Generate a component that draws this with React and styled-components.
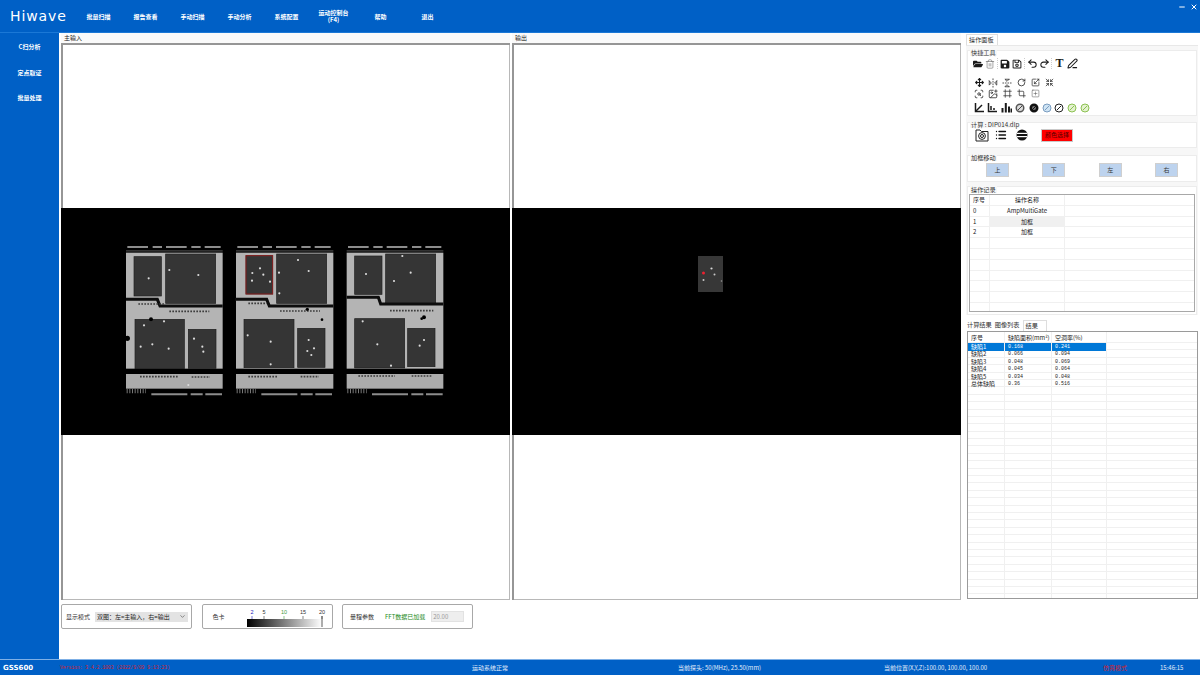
import React from 'react';
import styled, { createGlobalStyle } from 'styled-components';
import {
  FaFolderOpen, FaSave, FaRegSave, FaArrowsAlt,
} from 'react-icons/fa';
import {
  Trash2, Undo2, Redo2, PenLine, FlipHorizontal2, FlipVertical2, RotateCw, Scaling, Shrink,
  ScanSearch, ImagePlus, Frame, Crop, SquarePlus, ChevronDown, List, Minus, X,
} from 'lucide-react';

const BLUE = '#0060c6';
const CJK = `'Noto Sans CJK SC', 'Noto Sans', sans-serif`;

const GlobalStyle = createGlobalStyle`
  html, body { margin: 0; padding: 0; background: #fff; }
  body { font-family: ${CJK}; font-size: 6px; color: #222; }
  * { box-sizing: border-box; }
`;

const Shell = styled.div`
  display: grid;
  grid-template-rows: 33px 1fr 16px;
  width: 1200px;
  height: 675px;
  overflow: hidden;
  background: ${BLUE};
`;

/* top bar */
const TopBar = styled.header`
  display: flex;
  align-items: center;
  background: ${BLUE};
  color: #fff;
  border-bottom: 1px solid #1b78d6;
`;

const Logo = styled.div`
  width: 75px;
  padding-left: 10px;
  font-family: 'DejaVu Sans', sans-serif;
  font-size: 14px;
  letter-spacing: 0.9px;
`;

const MenuItem = styled.div`
  width: 47px;
  text-align: center;
  font-size: 6px;
  font-weight: 700;
  line-height: 7px;
`;

const WindowButtons = styled.div`
  display: flex;
  align-items: center;
  gap: 4px;
  margin-left: auto;
  margin-right: 2px;
  margin-top: -19px;
`;

/* middle */
const Middle = styled.div`
  display: flex;
  min-height: 0;
`;

const SideNav = styled.nav`
  display: flex;
  flex-direction: column;
  width: 59px;
  padding-top: 1px;
  background: ${BLUE};
`;

const NavItem = styled.div`
  height: 25.6px;
  line-height: 25.6px;
  text-align: center;
  color: #fff;
  font-size: 6px;
  font-weight: 700;
`;

const Workspace = styled.main`
  flex: 1;
  display: flex;
  flex-direction: column;
  background: #fff;
`;

const ViewRow = styled.div`
  display: flex;
  height: 567px;
  padding-left: 2px;
`;

const Viewer = styled.section`
  display: flex;
  flex-direction: column;
  width: 449px;
  margin-right: ${(p) => p.$gap}px;
`;

const ViewerTab = styled.div`
  height: 10px;
  line-height: 9px;
  padding-left: 3px;
  font-size: 6px;
  color: #222;
  background: #fafafa;
`;

const ViewerFrame = styled.div`
  flex: 1;
  display: flex;
  align-items: center;
  background: #fff;
  box-shadow: inset 2px 2px 0 #969696, inset -1px -1px 0 #b8b8b8;
`;

const BlackImage = styled.svg`
  display: block;
  width: 100%;
  height: 227px;
  background: #000;
`;

/* right operations column */
const OpsColumn = styled.aside`
  display: flex;
  flex-direction: column;
  width: 232px;
`;

const TabStrip = styled.div`
  display: flex;
  align-items: flex-end;
  height: ${(p) => p.$h}px;
  gap: ${(p) => p.$gap || 0}px;
  padding-left: ${(p) => p.$pad || 0}px;
`;

const Tab = styled.div`
  height: 11px;
  line-height: 10px;
  padding: 0 ${(p) => p.$pr}px 0 ${(p) => p.$pl}px;
  font-size: 6.2px;
  color: #333;
  background: ${(p) => (p.$active ? '#fff' : 'transparent')};
  border: ${(p) => (p.$active ? '1px solid #dedede' : 'none')};
  border-bottom: none;
`;

const OpsBody = styled.div`
  height: 270px;
  padding: 4px 1px 0;
  background: #f7f7f7;
  border-top: 1px solid #e8e8e8;
`;

const Group = styled.fieldset`
  position: relative;
  display: block;
  height: ${(p) => p.$h}px;
  margin: 0 0 ${(p) => p.$mb}px;
  padding: ${(p) => p.$pt}px 1px 0;
  background: #fff;
  border: 1px solid #ececec;
`;

const Legend = styled.span`
  position: absolute;
  top: ${(p) => p.$top ?? -2}px;
  left: 2px;
  padding: 0 1px;
  height: 7px;
  line-height: 7px;
  font-size: 6.2px;
  color: #333;
  background: #f7f7f7;
`;

const IconRow = styled.div`
  display: flex;
  align-items: center;
  height: 11px;
  margin-top: ${(p) => p.$mt || 0}px;
  padding-left: 3px;
  gap: ${(p) => p.$gap || 0}px;
`;

const IconPair = styled.div`
  display: flex;
  align-items: center;
  padding-right: 1px;
  border-right: 1px dotted #ccc;
`;

const Slot = styled.span`
  display: flex;
  align-items: center;
  justify-content: center;
  width: ${(p) => p.$w || 14}px;
  height: 11px;
  color: ${(p) => p.$c || '#1a1a1a'};
`;

const SerifT = styled.span`
  font-family: 'Liberation Serif', serif;
  font-size: 12px;
  font-weight: 700;
  line-height: 11px;
`;

const CalcRow = styled.div`
  display: flex;
  align-items: center;
  height: 14px;
  padding-left: 5px;
`;

const CalcSlot = styled.span`
  display: flex;
  justify-content: center;
  width: ${(p) => p.$w}px;
  color: #111;
`;

const RedButton = styled.div`
  width: 32px;
  height: 13px;
  margin-left: 9px;
  line-height: 10px;
  text-align: center;
  font-size: 6px;
  color: #5a0000;
  background: #f00;
  border: 1px solid #c9c9c9;
`;

const MoveRow = styled.div`
  display: flex;
  justify-content: space-between;
  padding: 0 17px;
`;

const MoveButton = styled.div`
  width: 23px;
  height: 14px;
  line-height: 12px;
  text-align: center;
  font-size: 6px;
  color: #333;
  background: #bdd3ee;
  border: 1px solid #cfcfcf;
`;

const LogTable = styled.div`
  height: 118px;
  overflow: hidden;
  background: #fff;
  border: 1px solid #a8a8a8;
`;

const GridRow = styled.div`
  display: grid;
  grid-template-columns: ${(p) => p.$cols};
  height: ${(p) => p.$h}px;
  line-height: ${(p) => p.$h}px;
  font-size: 6px;
  color: #222;
  border-bottom: 1px solid #f0f0f0;
`;

const Cell = styled.div`
  padding-left: ${(p) => p.$pad ?? 3}px;
  padding-top: ${(p) => (p.$num ? 1 : 0)}px;
  font-family: ${(p) => (p.$num ? `'Liberation Mono', monospace` : 'inherit')};
  font-size: ${(p) => (p.$num ? '5px' : 'inherit')};
  text-align: ${(p) => p.$align || 'left'};
  background: ${(p) => p.$bg || 'transparent'};
  color: ${(p) => p.$fg || 'inherit'};
  border-right: 1px solid ${(p) => (p.$flat ? 'transparent' : '#f0f0f0')};
  white-space: nowrap;
`;

const ResultFrame = styled.div`
  height: 268px;
  margin-left: 1px;
  overflow: hidden;
  background: #fff;
  border: 1px solid #9a9a9a;
`;

/* bottom tools */
const ToolRow = styled.div`
  display: flex;
  gap: 9.5px;
  padding: 4px 0 0 2px;
`;

const ToolBox = styled.div`
  display: flex;
  align-items: center;
  width: 131px;
  height: 25px;
  padding-left: ${(p) => p.$pad}px;
  font-size: 6px;
  color: #333;
  border: 1px solid #a8a8a8;
  border-radius: 2px;
`;

const FakeSelect = styled.div`
  display: flex;
  align-items: center;
  justify-content: space-between;
  width: 93px;
  height: 10px;
  margin-left: 5px;
  padding: 0 2px;
  background: #e3e3e3;
  color: #222;
`;

const LoadedText = styled.span`
  margin-left: 11px;
  color: #1a8a1a;
`;

const ValueBox = styled.span`
  width: 33px;
  height: 11px;
  margin-left: 6px;
  padding-left: 1px;
  line-height: 10px;
  color: #999;
  background: #eeeeee;
  border: 1px solid #e2e2e2;
`;

const ScaleSvg = styled.svg`
  display: block;
  margin-left: 22px;
`;

/* status bar */
const StatusBar = styled.footer`
  display: grid;
  grid-template-columns: 57px 412px 206px 206px 219px 57px 1fr;
  align-items: center;
  padding-left: 3px;
  font-size: 6px;
  color: #fff;
  background: ${BLUE};
  border-top: 1px solid #7fb0e6;
`;

const BrandName = styled.div`
  font-family: 'DejaVu Sans', sans-serif;
  font-size: 7px;
  font-weight: 700;
`;

const StatusText = styled.div`
  font-family: ${(p) => (p.$mono ? `'Liberation Mono', ${CJK}` : CJK)};
  font-size: ${(p) => (p.$mono ? 4.7 : 6)}px;
  color: ${(p) => p.$c || '#e4eefb'};
  white-space: nowrap;
`;

const MENU = ['批量扫描', '报告查看', '手动扫描', '手动分析', '系统配置', '运动控制台\n(F4)', '帮助', '退出'];
const NAV = ['C扫分析', '定点取证', '批量处理'];

/* the scan picture, in 3x crop units */
const CHIPS = [
  {
    x: 18, w: 290,
    pads: [[42, 50, 82, 118], [137, 42, 150, 148], [45, 238, 148, 148], [205, 268, 83, 117]],
    notch: '18,178 112,178 120,198 308,198',
    dots: [[86, 115], [235, 105], [148, 90], [62, 320], [97, 313], [146, 326], [222, 296], [247, 320], [250, 335], [132, 244], [72, 256], [205, 435]],
    holes: [[93, 238, 6], [22, 295, 8]],
    rows: [[55, 192, 80], [148, 214, 120], [60, 410, 115], [215, 411, 55]],
  },
  {
    x: 348, w: 292,
    pads: [[378, 47, 80, 115], [470, 42, 150, 148], [372, 238, 150, 145], [533, 265, 82, 117]],
    notch: '345,178 440,178 448,198 640,198',
    red: [378, 47, 80, 115],
    dots: [[397, 99], [420, 85], [430, 104], [396, 122], [450, 125], [534, 60], [566, 93], [477, 98], [478, 160], [383, 286], [452, 305], [452, 373], [566, 300], [562, 333], [582, 325], [574, 345]],
    holes: [[562, 208, 5], [606, 239, 4]],
    rows: [[385, 190, 55], [480, 213, 120], [385, 410, 90], [542, 410, 55]],
  },
  {
    x: 680, w: 290,
    pads: [[704, 48, 82, 115], [797, 42, 150, 148], [704, 236, 150, 148], [863, 265, 82, 115]],
    notch: '680,172 775,172 782,192 970,192',
    dots: [[847, 48], [872, 98], [822, 123], [772, 313], [899, 317], [813, 377], [728, 244], [912, 300], [738, 102]],
    holes: [[912, 232, 6], [905, 236, 4]],
    rows: [[810, 212, 130], [715, 408, 110], [875, 408, 60]],
  },
];

const Chip = ({ chip }) => (
  <g>
    <rect x={chip.x} y={38} width={chip.w} height={348} fill="#b4b4b4" />
    {chip.pads.map((p) => (
      <rect key={p.join()} x={p[0]} y={p[1]} width={p[2]} height={p[3]} fill="#363636" stroke="#1c1c1c" strokeWidth="2" />
    ))}
    <polyline points={chip.notch} fill="none" stroke="#0a0a0a" strokeWidth="9" />
    <rect x={chip.x} y={402} width={chip.w} height={44} fill="#ababab" />
    <rect x={chip.x} y={30} width={chip.w} height={5} fill="#333" />
    <line x1={chip.x + 4} y1={21} x2={chip.x + 284} y2={21} stroke="#8c8c8c" strokeWidth="6" strokeDasharray="62 14 28 12" />
    <line x1={chip.x + 76} y1={463} x2={chip.x + 288} y2={463} stroke="#8c8c8c" strokeWidth="6" strokeDasharray="108 10 36 8" />
    <line x1={chip.x + 2} y1={452} x2={chip.x + 60} y2={452} stroke="#777" strokeWidth="16" strokeDasharray="3 5" />
    {chip.rows.map((r) => (
      <line key={r.join()} x1={r[0]} y1={r[1]} x2={r[0] + r[2]} y2={r[1]} stroke="#3c3c3c" strokeWidth="5" strokeDasharray="5 4" />
    ))}
    {chip.dots.map((d) => (
      <circle key={d.join()} cx={d[0]} cy={d[1]} r="3.2" fill="#dcdcdc" />
    ))}
    {chip.holes.map((h) => (
      <circle key={h.join()} cx={h[0]} cy={h[1]} r={h[2]} fill="#050505" />
    ))}
    {chip.red && (
      <rect x={chip.red[0]} y={chip.red[1]} width={chip.red[2]} height={chip.red[3]} fill="none" stroke="#8a2020" strokeWidth="3" />
    )}
  </g>
);

const InputPicture = () => (
  <BlackImage viewBox="-177 -96 1347 681" preserveAspectRatio="none">
    <defs>
      <filter id="soft"><feGaussianBlur stdDeviation="1.4" /></filter>
    </defs>
    <g filter="url(#soft)">
      {CHIPS.map((c) => <Chip key={c.x} chip={c} />)}
    </g>
  </BlackImage>
);

const OutputPicture = () => (
  <BlackImage viewBox="512 208 449 227" preserveAspectRatio="none">
    <rect x="698" y="256" width="25" height="36" fill="#373737" />
    <circle cx="711.5" cy="268.5" r="1.1" fill="#d8d8d8" />
    <circle cx="714.5" cy="274.5" r="1" fill="#c8c8c8" />
    <circle cx="703.5" cy="280" r="1" fill="#c8c8c8" />
    <circle cx="721.5" cy="281" r="0.8" fill="#999" />
    <circle cx="703.5" cy="273" r="1.5" fill="#ee2030" />
  </BlackImage>
);

const AngleIcon = ({ flip }) => (
  <svg width="11" height="11" viewBox="0 0 11 11" fill="none" stroke="#1a1a1a" strokeWidth="1.5">
    <path d="M1.5 1v8.5H10" />
    <path d={flip ? 'M4 8V4M7 8V6' : 'M2 9L8 3'} />
  </svg>
);

const BarsIcon = () => (
  <svg width="11" height="11" viewBox="0 0 11 11" fill="#1a1a1a">
    <rect x="0.5" y="6" width="2" height="4.5" />
    <rect x="3.8" y="1" width="2" height="9.5" />
    <rect x="7" y="4.5" width="2" height="6" />
    <rect x="9.5" y="6.5" width="1.5" height="4" />
  </svg>
);

const DialIcon = ({ ring, fill, mark, bw = 1 }) => (
  <svg width="10" height="10" viewBox="0 0 10 10" fill="none">
    <circle cx="5" cy="5" r={4.5 - bw / 2} fill={fill} stroke={ring} strokeWidth={bw} />
    <path d="M3 7L7 3" stroke={mark} strokeWidth="1" />
  </svg>
);

const ProbeIcon = () => (
  <svg width="14" height="14" viewBox="0 0 14 14" fill="none" stroke="#222" strokeWidth="1">
    <path d="M1 2h4l1.5 1.5H13v9.5H1z" />
    <circle cx="7" cy="8" r="3.4" />
    <circle cx="7" cy="8" r="1.5" />
  </svg>
);

const NoEntry = () => (
  <svg width="12" height="12" viewBox="0 0 12 12">
    <circle cx="6" cy="6" r="5.5" fill="#111" />
    <rect x="1" y="3.8" width="10" height="1.2" fill="#fff" />
    <rect x="1" y="7" width="10" height="1.2" fill="#fff" />
  </svg>
);

const ColorScale = () => {
  const ticks = [[5, '2', '#2222bb'], [17, '5', '#333'], [37, '10', '#3f9a3f'], [56, '15', '#333'], [75, '20', '#333']];
  return (
    <ScaleSvg width="80" height="20" viewBox="0 0 80 20">
      <defs>
        <linearGradient id="scale">
          <stop offset="0" stopColor="#000" />
          <stop offset="1" stopColor="#fff" />
        </linearGradient>
      </defs>
      <rect x="0" y="12" width="75" height="8" fill="url(#scale)" />
      {ticks.map(([x, label, c]) => (
        <g key={label}>
          <line x1={x} y1="9" x2={x} y2="12" stroke={c} strokeWidth="0.6" />
          <text x={x} y="7" fontSize="5.5" textAnchor="middle" fill={c} fontFamily="Liberation Sans, sans-serif">{label}</text>
        </g>
      ))}
      <line x1="75" y1="9" x2="75" y2="20" stroke="#333" strokeWidth="0.8" />
    </ScaleSvg>
  );
};

const LOG_COLS = '20px 75px 1fr';
const LOG_ROWS = [
  ['序号', '操作名称'],
  ['0', 'AmpMultiGate'],
  ['1', '加框', true],
  ['2', '加框'],
  ...Array.from({ length: 7 }, () => ['', '']),
];

const RES_COLS = '37px 47px 55px 1fr';
const RESULTS = [
  ['缺陷1', '0.168', '0.241'],
  ['缺陷2', '0.066', '0.094'],
  ['缺陷3', '0.048', '0.069'],
  ['缺陷4', '0.045', '0.064'],
  ['缺陷5', '0.034', '0.048'],
  ['总体缺陷', '0.36', '0.516'],
];

const App = () => (
  <Shell>
    <GlobalStyle />
    <TopBar>
      <Logo>Hiwave</Logo>
      {MENU.map((m) => (
        <MenuItem key={m}>
          {m.split('\n').map((line) => <div key={line}>{line}</div>)}
        </MenuItem>
      ))}
      <WindowButtons>
        <Minus size={8} strokeWidth={3} color="#fff" />
        <X size={8} strokeWidth={3} color="#fff" />
      </WindowButtons>
    </TopBar>

    <Middle>
      <SideNav>
        {NAV.map((n) => <NavItem key={n}>{n}</NavItem>)}
      </SideNav>
      <Workspace>
        <ViewRow>
          <Viewer $gap={2}>
            <ViewerTab>主输入</ViewerTab>
            <ViewerFrame><InputPicture /></ViewerFrame>
          </Viewer>
          <Viewer $gap={5}>
            <ViewerTab>输出</ViewerTab>
            <ViewerFrame><OutputPicture /></ViewerFrame>
          </Viewer>
          <OpsColumn>
            <TabStrip $h={12}><Tab $active $pl={2} $pr={3}>操作面板</Tab></TabStrip>
            <OpsBody>
              <Group $h={66} $mb={6} $pt={7}>
                <Legend>快捷工具</Legend>
                <IconRow $gap={1}>
                  <IconPair>
                    <Slot $w={12}><FaFolderOpen size={10} /></Slot>
                    <Slot $w={12} $c="#666"><Trash2 size={10} strokeWidth={1.4} /></Slot>
                  </IconPair>
                  <IconPair>
                    <Slot $w={12}><FaSave size={10} /></Slot>
                    <Slot $w={12}><FaRegSave size={10} /></Slot>
                  </IconPair>
                  <IconPair>
                    <Slot $w={12}><Undo2 size={11} strokeWidth={2.2} /></Slot>
                    <Slot $w={12}><Redo2 size={11} strokeWidth={2.2} /></Slot>
                  </IconPair>
                  <Slot $w={13}><SerifT>T</SerifT></Slot>
                  <Slot $w={11}><PenLine size={11} strokeWidth={2.2} /></Slot>
                </IconRow>
                <IconRow $mt={8}>
                  <Slot><FaArrowsAlt size={9} /></Slot>
                  <Slot $c="#333"><FlipHorizontal2 size={10} /></Slot>
                  <Slot $c="#333"><FlipVertical2 size={10} /></Slot>
                  <Slot><RotateCw size={9} strokeWidth={2} /></Slot>
                  <Slot $c="#333"><Scaling size={9} /></Slot>
                  <Slot $c="#333"><Shrink size={9} /></Slot>
                </IconRow>
                <IconRow>
                  <Slot $c="#333"><ScanSearch size={10} /></Slot>
                  <Slot $c="#333"><ImagePlus size={10} /></Slot>
                  <Slot $c="#333"><Frame size={9} /></Slot>
                  <Slot $c="#333"><Crop size={9} /></Slot>
                  <Slot $c="#555"><SquarePlus size={9} strokeWidth={1.4} /></Slot>
                </IconRow>
                <IconRow $mt={3}>
                  <Slot><AngleIcon /></Slot>
                  <Slot $w={13.5}><AngleIcon flip /></Slot>
                  <Slot $w={13.5}><BarsIcon /></Slot>
                  <Slot $w={14.5}><DialIcon ring="#555" fill="#ddd" mark="#444" bw={1.5} /></Slot>
                  <Slot $w={13}><DialIcon ring="#111" fill="#777" mark="#111" bw={2.5} /></Slot>
                  <Slot $w={12}><DialIcon ring="#7a9cc0" fill="#cfe4f4" mark="#7a9cc0" /></Slot>
                  <Slot $w={12.5}><DialIcon ring="#222" fill="#fff" mark="#222" /></Slot>
                  <Slot $w={13}><DialIcon ring="#8cc152" fill="#e4f2d0" mark="#8cc152" /></Slot>
                  <Slot $w={13}><DialIcon ring="#8cc152" fill="#e4f2d0" mark="#8cc152" /></Slot>
                </IconRow>
              </Group>

              <Group $h={26} $mb={7} $pt={5}>
                <Legend>计算 : DIP014.dlp</Legend>
                <CalcRow>
                  <CalcSlot $w={15}><ProbeIcon /></CalcSlot>
                  <CalcSlot $w={23}><List size={12} strokeWidth={2.6} /></CalcSlot>
                  <CalcSlot $w={20}><NoEntry /></CalcSlot>
                  <RedButton>颜色选择</RedButton>
                </CalcRow>
              </Group>

              <Group $h={27} $mb={4} $pt={7}>
                <Legend>加框移动</Legend>
                <MoveRow>
                  {['上', '下', '左', '右'].map((t) => <MoveButton key={t}>{t}</MoveButton>)}
                </MoveRow>
              </Group>

              <Group $h={129} $mb={0} $pt={7}>
                <Legend $top={-1}>操作记录</Legend>
                <LogTable>
                  {LOG_ROWS.map((r, i) => (
                    <GridRow key={i} $cols={LOG_COLS} $h={10.8}>
                      <Cell>{r[0]}</Cell>
                      <Cell $align="center" $pad={0} $bg={r[2] ? '#f0f0f0' : undefined}>{r[1]}</Cell>
                      <Cell $flat />
                    </GridRow>
                  ))}
                </LogTable>
              </Group>
            </OpsBody>

            <TabStrip $h={16} $pad={1} $gap={3}>
              <Tab $pl={0} $pr={0}>计算结果</Tab>
              <Tab $pl={0} $pr={0}>图像列表</Tab>
              <Tab $active $pl={2} $pr={8}>结果</Tab>
            </TabStrip>
            <ResultFrame>
              <GridRow $cols={RES_COLS} $h={11}>
                <Cell>序号</Cell>
                <Cell>缺陷面积(mm²)</Cell>
                <Cell>空洞率(%)</Cell>
                <Cell $flat />
              </GridRow>
              {RESULTS.map((r, i) => (
                <GridRow key={r[0]} $cols={RES_COLS} $h={7.4}>
                  {r.map((v, c) => (
                    <Cell
                      key={v}
                      $num={c > 0}
                      $bg={i === 0 ? '#0078d7' : undefined}
                      $fg={i === 0 ? '#fff' : undefined}
                    >
                      {v}
                    </Cell>
                  ))}
                  <Cell $flat />
                </GridRow>
              ))}
              {Array.from({ length: 30 }, (_, i) => (
                <GridRow key={i} $cols={RES_COLS} $h={7.4}>
                  <Cell /><Cell /><Cell /><Cell $flat />
                </GridRow>
              ))}
            </ResultFrame>
          </OpsColumn>
        </ViewRow>

        <ToolRow>
          <ToolBox $pad={4}>
            显示模式
            <FakeSelect>
              双图：左=主输入，右=输出
              <ChevronDown size={7} color="#444" />
            </FakeSelect>
          </ToolBox>
          <ToolBox $pad={10}>
            色卡
            <ColorScale />
          </ToolBox>
          <ToolBox $pad={7}>
            量程参数
            <LoadedText>FFT数据已加载</LoadedText>
            <ValueBox>20.00</ValueBox>
          </ToolBox>
        </ToolRow>
      </Workspace>
    </Middle>

    <StatusBar>
      <BrandName>GSS600</BrandName>
      <StatusText $mono $c="#d81e2c">Version: 3.4.2.1003 (2022/9/09 9:13:23)</StatusText>
      <StatusText>运动系统正常</StatusText>
      <StatusText>当前探头: 50(MHz), 25.50(mm)</StatusText>
      <StatusText>当前位置(X,Y,Z):100.00, 100.00, 100.00</StatusText>
      <StatusText $c="#d81e2c">仿真模式</StatusText>
      <StatusText>15:46:15</StatusText>
    </StatusBar>
  </Shell>
);

export default App;
